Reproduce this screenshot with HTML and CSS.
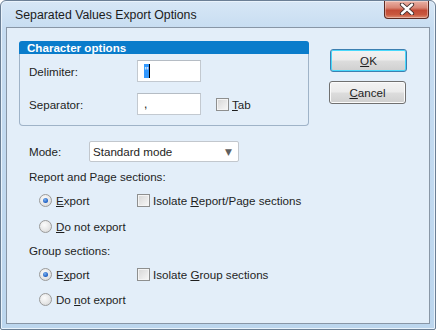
FILE: index.html
```html
<!DOCTYPE html>
<html>
<head>
<meta charset="utf-8">
<link rel="stylesheet" href="styles.css">
</head>
<body>
<div class="window">
  <div class="titlebar">
    <span class="title">Separated Values Export Options</span>
    <div class="close">
      <svg width="16" height="12" viewBox="0 0 16 12">
        <path d="M3 1.5 L13 10.5 M13 1.5 L3 10.5" stroke="#3b2a2a" stroke-width="4.2" stroke-linecap="round"/>
        <path d="M3 1.5 L13 10.5 M13 1.5 L3 10.5" stroke="#ffffff" stroke-width="2.4" stroke-linecap="round"/>
      </svg>
    </div>
  </div>
  <div class="client">
    <div class="top">
      <div class="group">
        <div class="group-head">Character options</div>
        <div class="group-body">
          <div class="field">
            <span class="lbl">Delimiter:</span>
            <div class="textbox"><span class="selected">"</span><span class="caret"></span></div>
          </div>
          <div class="field">
            <span class="lbl">Separator:</span>
            <div class="textbox">,</div>
            <div class="check tab"><span class="box"></span><span><u>T</u>ab</span></div>
          </div>
        </div>
      </div>
      <div class="buttons">
        <div class="btn default"><span><u>O</u>K</span></div>
        <div class="btn"><span><u>C</u>ancel</span></div>
      </div>
    </div>

    <div class="mode-row">
      <span class="mode-lbl">Mode:</span>
      <div class="select"><span>Standard mode</span><span class="arrow">&#9660;</span></div>
    </div>

    <div class="section-title">Report and Page sections:</div>
    <div class="opt-row first">
      <div class="radio-item"><span class="radio checked"></span><span><u>E</u>xport</span></div>
      <div class="check"><span class="box"></span><span>Isolate <u>R</u>eport/Page sections</span></div>
    </div>
    <div class="opt-row">
      <div class="radio-item"><span class="radio"></span><span><u>D</u>o not export</span></div>
    </div>

    <div class="section-title second">Group sections:</div>
    <div class="opt-row first">
      <div class="radio-item"><span class="radio checked"></span><span>E<u>x</u>port</span></div>
      <div class="check"><span class="box"></span><span>Isolate <u>G</u>roup sections</span></div>
    </div>
    <div class="opt-row last">
      <div class="radio-item"><span class="radio"></span><span>Do <u>n</u>ot export</span></div>
    </div>
  </div>
</div>
</body>
</html>
```

FILE: styles.css
```css
* { box-sizing: border-box; }

html, body {
  margin: 0;
  padding: 0;
  background: #ffffff;
}

body {
  font-family: "Liberation Sans", Arial, sans-serif;
  font-size: 11.6px;
  color: #1e1e1e;
}

u { text-decoration: underline; text-underline-offset: 1px; }

.window {
  width: 436px;
  height: 330px;
  border: 1px solid #6b7f95;
  border-radius: 6px 6px 2px 2px;
  background: linear-gradient(to bottom, #d7e7f6 0px, #c6dcf1 30px, #bcd6ee 100%);
  padding: 0 5px 5px 5px;
  display: flex;
  flex-direction: column;
  box-shadow: inset 0 0 0 1px #e9f3fc;
}

.titlebar {
  height: 26px;
  display: flex;
  align-items: flex-start;
  flex: none;
}

.title {
  font-size: 12.3px;
  color: #1b1b1b;
  margin: 7px 0 0 9px;
  line-height: 14px;
}

.close {
  margin-left: auto;
  margin-right: 1px;
  width: 45px;
  height: 18px;
  border: 1px solid #5d2a22;
  border-top: none;
  border-radius: 0 0 4px 4px;
  background: linear-gradient(to bottom, #eab2a6 0%, #d88574 40%, #c24a35 55%, #c9583f 80%, #de8d72 100%);
  box-shadow: inset 0 0 0 1px rgba(255,255,255,0.35);
  display: flex;
  align-items: center;
  justify-content: center;
  padding-bottom: 1px;
}

.client {
  flex: 1;
  background: #e3eef9;
  border: 1px solid #8896a6;
  padding: 13px 0 0 12px;
  display: flex;
  flex-direction: column;
}

.top {
  display: flex;
  align-items: flex-start;
}

.group {
  width: 290px;
  border: 1px solid #9fb3c8;
  border-top: none;
  border-radius: 4px;
  display: flex;
  flex-direction: column;
}

.group-head {
  margin: 0 -1px;
  height: 13px;
  background: #0a7ccb;
  border-radius: 3px 3px 0 0;
  color: #ffffff;
  font-weight: bold;
  font-size: 11.6px;
  line-height: 13px;
  padding-left: 8px;
}

.group-body {
  padding: 6px 0 10px 9px;
  display: flex;
  flex-direction: column;
  gap: 11px;
}

.field {
  height: 22px;
  display: flex;
  align-items: center;
}

.lbl {
  width: 108px;
  flex: none;
}

.textbox {
  width: 64px;
  height: 22px;
  background: #ffffff;
  border: 1px solid #c3c9d0;
  border-top-color: #b5bcc4;
  padding: 0 4px 0 6px;
  display: flex;
  align-items: center;
  font-size: 12px;
  flex: none;
}

.selected {
  background: #3399ff;
  color: #ffffff;
  line-height: 14px;
  padding: 0 0.5px;
  font-size: 11px;
}

.caret {
  width: 1px;
  height: 14px;
  background: #000000;
}

.check {
  display: flex;
  align-items: center;
  gap: 3px;
}

.check.tab {
  margin-left: 15px;
}

.box {
  width: 13px;
  height: 13px;
  border: 1px solid #8e8f8f;
  background: linear-gradient(to bottom right, #d6d6d6, #f8f8f8);
  box-shadow: inset 0 0 0 1px #f4f4f4;
  flex: none;
}

.buttons {
  margin-left: 20px;
  margin-top: 8px;
  display: flex;
  flex-direction: column;
  gap: 9px;
}

.btn {
  width: 77px;
  height: 23px;
  border: 1px solid #707070;
  border-radius: 3px;
  background: linear-gradient(to bottom, #f3f3f3 0%, #ebebeb 48%, #dddddd 52%, #cfcfcf 100%);
  box-shadow: inset 0 0 0 1px #fbfbfb;
  display: flex;
  align-items: center;
  justify-content: center;
  font-size: 11.6px;
}

.btn.default {
  margin-left: 1px;
  border-color: #3c7fb1;
  background: linear-gradient(to bottom, #eaf6fd 0%, #d9f0fc 48%, #bee6fd 52%, #a7d9f5 100%);
  box-shadow: inset 0 0 0 1px #48d8fb;
  background: linear-gradient(to bottom, #f2f2f2 0%, #ebebeb 48%, #dddddd 52%, #cfcfcf 100%);
}

.mode-row {
  margin: 15px 0 0 10px;
  height: 21px;
  display: flex;
  align-items: center;
}

.mode-lbl {
  width: 60px;
  flex: none;
}

.select {
  width: 150px;
  height: 21px;
  background: #ffffff;
  border: 1px solid #c2c7cd;
  border-radius: 2px;
  display: flex;
  align-items: center;
  padding: 0 6px 0 3px;
  font-size: 11.6px;
}

.select .arrow {
  margin-left: auto;
  color: #5f5f5f;
  font-size: 9px;
  font-family: "DejaVu Sans", sans-serif;
}

.section-title {
  margin: 7px 0 0 10px;
  line-height: 16px;
  height: 16px;
}

.section-title.second {
  margin-top: 6px;
}

.opt-row {
  margin: 4px 0 0 20px;
  height: 22px;
  display: flex;
  align-items: center;
}

.opt-row.last {
  margin-top: 3px;
}

.radio-item {
  width: 98px;
  flex: none;
  display: flex;
  align-items: center;
  gap: 4px;
}

.radio {
  width: 13px;
  height: 13px;
  border-radius: 50%;
  border: 1px solid #9a9a9a;
  background: radial-gradient(circle at 40% 35%, #fbfbfb 0%, #e9e9e9 50%, #d2d2d2 100%);
  display: flex;
  align-items: center;
  justify-content: center;
  flex: none;
}

.radio.checked::after {
  content: "";
  width: 5px;
  height: 5px;
  border-radius: 50%;
  background: radial-gradient(circle at 40% 35%, #7cb2f0 0%, #1c5cc0 70%, #0d3f94 100%);
}
```
